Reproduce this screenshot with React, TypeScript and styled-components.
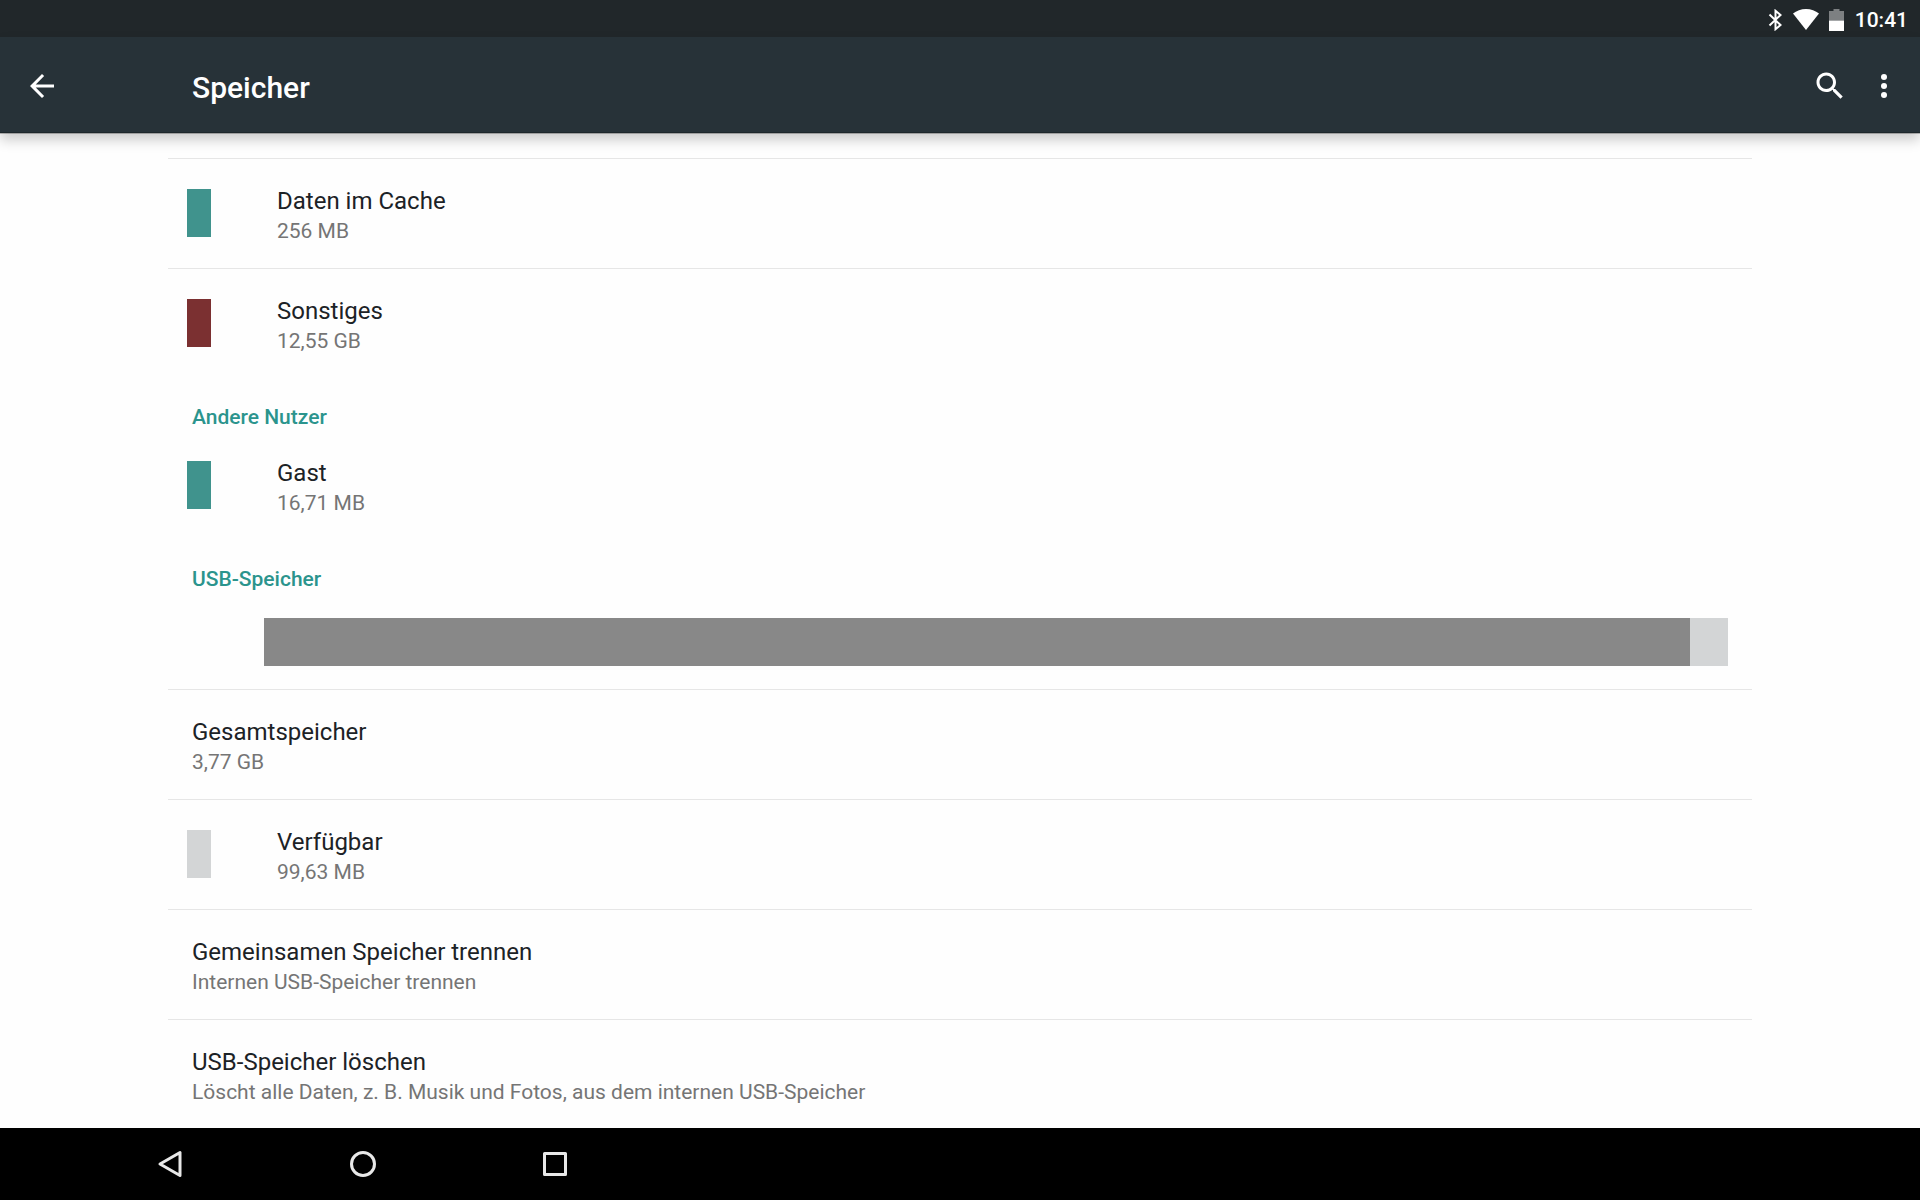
import React from "react";
import styled, { createGlobalStyle } from "styled-components";

const GlobalStyle = createGlobalStyle`
  *, *::before, *::after { box-sizing: border-box; }
  body {
    margin: 0;
    background: #fefefe;
    color: #1c2226;
    font-family: Roboto, "Noto Sans", sans-serif;
  }
  h1, h2, ul { margin: 0; padding: 0; }
  ul { list-style: none; }
  button {
    border: 0;
    padding: 0;
    background: none;
    color: inherit;
    font: inherit;
    text-align: left;
    cursor: pointer;
  }
`;

const Screen = styled.div`
  display: flex;
  flex-direction: column;
  height: 100vh;
`;

const StatusBar = styled.div`
  display: flex;
  align-items: center;
  justify-content: flex-end;
  flex: none;
  height: 37px;
  padding: 2px 12px 0 0;
  background: #21272a;
  color: #fff;
`;

const StatusIcons = styled.div`
  display: flex;
  align-items: center;
  gap: 10px;
  margin-right: 11px;

  svg { display: block; }
`;

const Clock = styled.time`
  font-size: 21px;
  line-height: 24px;
  font-weight: 500;
`;

const AppBar = styled.header`
  display: flex;
  align-items: center;
  flex: none;
  height: 96px;
  padding: 2px 18px 0 24px;
  background: #273238;
  border-bottom: 1px solid #1d272b;
  color: #fff;
  z-index: 1;
  box-shadow: 0 1px 0 rgba(0, 0, 0, 0.25), 0 7px 12px rgba(0, 0, 0, 0.2);
`;

const IconButton = styled.button`
  display: flex;
  flex: none;

  svg { display: block; width: 36px; height: 36px; fill: currentColor; }
`;

const Title = styled.h1`
  flex: 1;
  padding-top: 4px;
  padding-left: 132px;
  font-size: 30px;
  line-height: 36px;
  font-weight: 500;
`;

const Actions = styled.div`
  display: flex;
  gap: 18px;
`;

const Content = styled.main`
  flex: 1;
  min-height: 0;
  padding: 25px 168px 0;
  overflow-y: auto;
  scrollbar-width: none;
`;

const SectionTitle = styled.h2`
  padding: 25px 24px 0;
  color: #2b948d;
  font-size: 21px;
  line-height: 28px;
  font-weight: 500;
`;

const Item = styled.li<{ $divided: boolean }>`
  border-top: ${(p) => (p.$divided ? "1px solid #e6e6e6" : "0")};
`;

const Row = styled.button<{ $swatch: boolean }>`
  display: flex;
  align-items: center;
  gap: 66px;
  width: 100%;
  padding: 24px 24px 25px ${(p) => (p.$swatch ? "19px" : "24px")};
`;

const Swatch = styled.span<{ $color: string }>`
  flex: none;
  width: 24px;
  height: 48px;
  background: ${(p) => p.$color};
`;

const Label = styled.span`
  display: block;
  font-size: 24px;
  line-height: 36px;
`;

const Detail = styled.span`
  display: block;
  color: #757575;
  font-size: 21px;
  line-height: 24px;
`;

const UsageBar = styled.div`
  height: 48px;
  margin: 25px 24px 23px 96px;
  background: #d3d5d6;
`;

const UsageFill = styled.div`
  height: 100%;
  background: #888;
`;

const NavBar = styled.nav`
  display: flex;
  flex: none;
  height: 72px;
  padding-left: 75px;
  background: #000;
`;

const NavButton = styled.button`
  display: flex;
  align-items: center;
  justify-content: center;
  width: 192px;

  svg {
    width: 36px;
    height: 36px;
    fill: none;
    stroke: #e8e8e8;
    stroke-width: 3;
    stroke-linejoin: round;
  }
`;

type Entry = { label: string; detail: string; color?: string; divided?: boolean };

const internalEntries: Entry[] = [
  { label: "Daten im Cache", detail: "256 MB", color: "#40938d", divided: true },
  { label: "Sonstiges", detail: "12,55 GB", color: "#7b3031", divided: true },
];

const userEntries: Entry[] = [{ label: "Gast", detail: "16,71 MB", color: "#40938d" }];

const usbEntries: Entry[] = [
  { label: "Gesamtspeicher", detail: "3,77 GB", divided: true },
  { label: "Verfügbar", detail: "99,63 MB", color: "#d3d5d6", divided: true },
  { label: "Gemeinsamen Speicher trennen", detail: "Internen USB-Speicher trennen", divided: true },
  {
    label: "USB-Speicher löschen",
    detail: "Löscht alle Daten, z. B. Musik und Fotos, aus dem internen USB-Speicher",
    divided: true,
  },
];

const usbTotalMb = 3.77 * 1024;
const usbFreeMb = 99.63;

function EntryList({ entries }: { entries: Entry[] }) {
  return (
    <ul>
      {entries.map((entry) => (
        <Item key={entry.label} $divided={Boolean(entry.divided)}>
          <Row type="button" $swatch={Boolean(entry.color)}>
            {entry.color && <Swatch $color={entry.color} />}
            <span>
              <Label>{entry.label}</Label>
              <Detail>{entry.detail}</Detail>
            </span>
          </Row>
        </Item>
      ))}
    </ul>
  );
}

export default function App() {
  const usedPercent = (1 - usbFreeMb / usbTotalMb) * 100;

  return (
    <>
      <GlobalStyle />
      <Screen>
        <StatusBar>
          <StatusIcons>
            <svg width="15" height="22" viewBox="0 0 15 22" fill="none" stroke="#fff" strokeWidth="2" aria-hidden="true">
              <path d="M1.5 5.5 12.5 16 7.5 20.2V1.8L12.5 6 1.5 16.5" />
            </svg>
            <svg width="26" height="21" viewBox="0 0 26 21" fill="#fff" aria-hidden="true">
              <path d="M13 21 26 4.6C22.5 1.8 18 0 13 0S3.5 1.8 0 4.6Z" />
            </svg>
            <svg width="15" height="22" viewBox="0 0 15 22" aria-hidden="true">
              <path d="M4.5 0h6v2H15v9.500H0V2h4.500z" fill="#7d8082" />
              <path d="M0 11.500h15V22H0z" fill="#fff" />
            </svg>
          </StatusIcons>
          <Clock dateTime="10:41">10:41</Clock>
        </StatusBar>

        <AppBar>
          <IconButton type="button" aria-label="Zurück">
            <svg viewBox="0 0 24 24">
              <path d="M20 11H7.830l5.590-5.590L12 4l-8 8 8 8 1.410-1.410L7.830 13H20v-2z" />
            </svg>
          </IconButton>
          <Title>Speicher</Title>
          <Actions>
            <IconButton type="button" aria-label="Suchen">
              <svg viewBox="0 0 24 24">
                <path d="M15.500 14h-.790l-.280-.270C15.410 12.590 16 11.110 16 9.500 16 5.910 13.090 3 9.500 3S3 5.910 3 9.500 5.910 16 9.500 16c1.610 0 3.090-.590 4.230-1.570l.270.280v.790l5 4.990L20.490 19l-4.990-5zm-6 0C7.010 14 5 11.990 5 9.500S7.010 5 9.500 5 14 7.010 14 9.500 11.990 14 9.500 14z" />
              </svg>
            </IconButton>
            <IconButton type="button" aria-label="Weitere Optionen">
              <svg viewBox="0 0 24 24">
                <circle cx="12" cy="6" r="2" />
                <circle cx="12" cy="12" r="2" />
                <circle cx="12" cy="18" r="2" />
              </svg>
            </IconButton>
          </Actions>
        </AppBar>

        <Content>
          <EntryList entries={internalEntries} />
          <SectionTitle>Andere Nutzer</SectionTitle>
          <EntryList entries={userEntries} />
          <SectionTitle>USB-Speicher</SectionTitle>
          <UsageBar>
            <UsageFill style={{ width: `${usedPercent}%` }} />
          </UsageBar>
          <EntryList entries={usbEntries} />
        </Content>

        <NavBar>
          <NavButton type="button" aria-label="Zurück">
            <svg viewBox="0 0 36 36">
              <path d="M7 18 27 6.500v23z" />
            </svg>
          </NavButton>
          <NavButton type="button" aria-label="Startbildschirm">
            <svg viewBox="0 0 36 36">
              <circle cx="18" cy="18" r="11.500" />
            </svg>
          </NavButton>
          <NavButton type="button" aria-label="Übersicht">
            <svg viewBox="0 0 36 36">
              <rect x="7.500" y="7.500" width="21" height="21" />
            </svg>
          </NavButton>
        </NavBar>
      </Screen>
    </>
  );
}
